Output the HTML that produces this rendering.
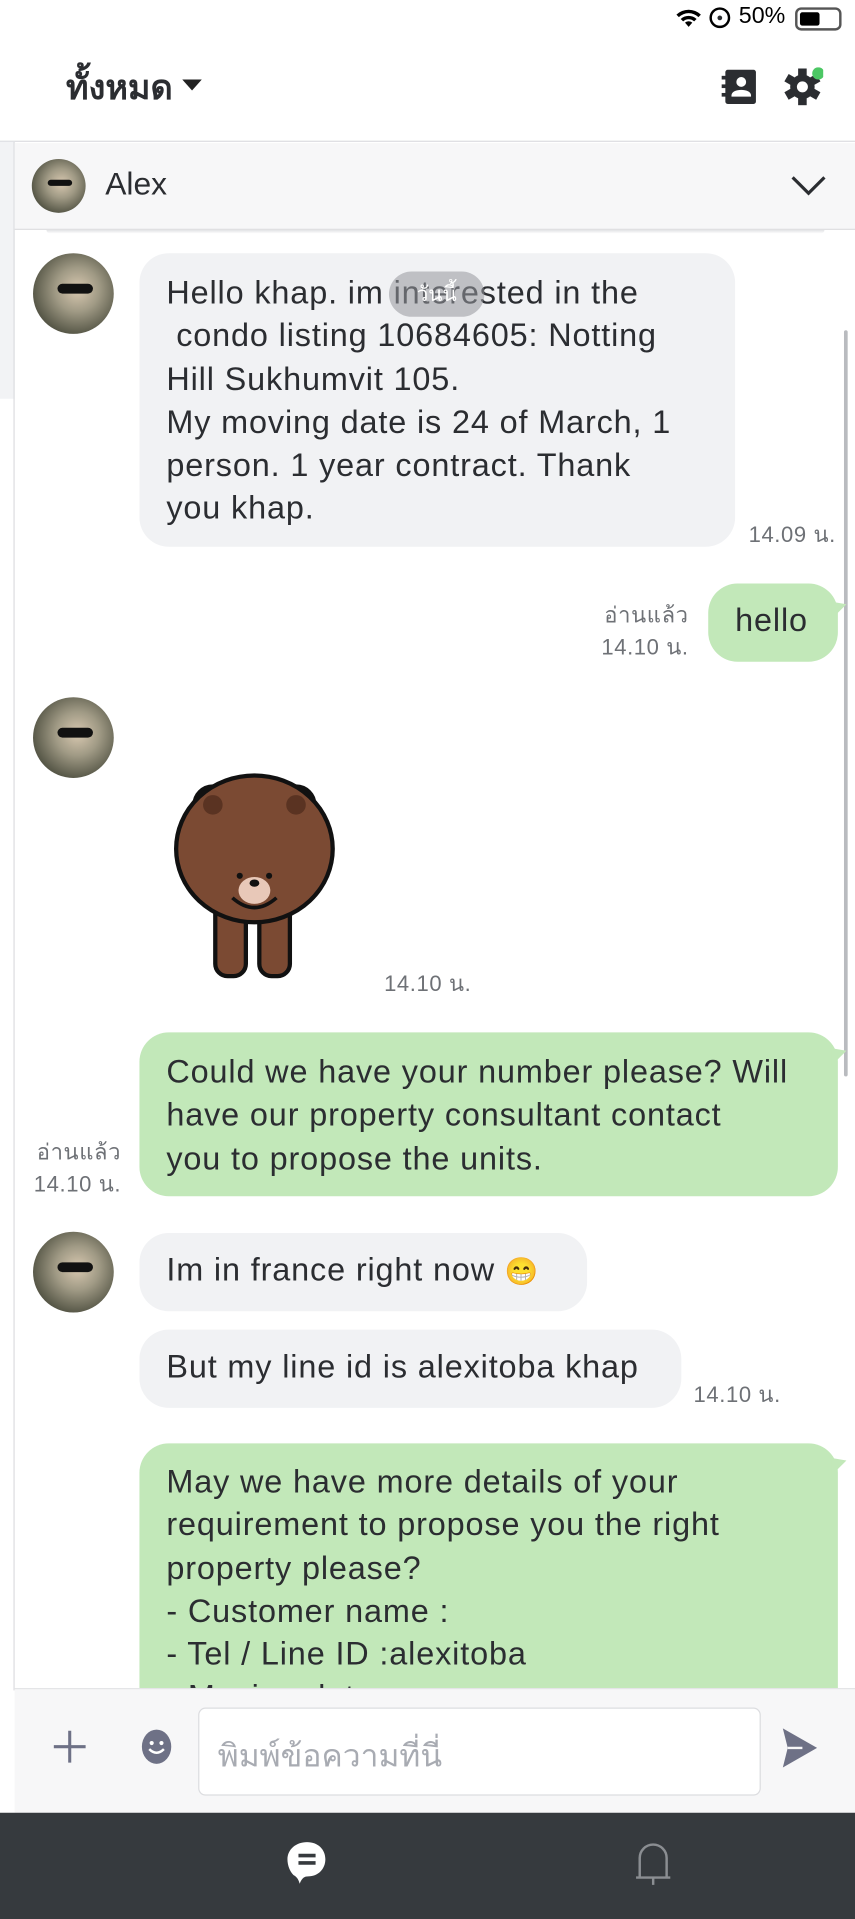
<!DOCTYPE html>
<html><head><meta charset="utf-8"><style>
*{margin:0;padding:0;box-sizing:border-box}
html,body{width:855px;height:1919px;overflow:hidden;background:#fff}
#w{position:absolute;left:0;top:0;width:699px;height:1569px;transform:scale(1.22318);transform-origin:0 0;font-family:"Liberation Sans","Noto Sans CJK SC",sans-serif;color:#2b2d31;overflow:hidden}
.a{position:absolute}
.av{position:absolute;border-radius:50%;background:radial-gradient(circle at 55% 45%,#d8c8b0 0,#a09a85 35%,#5a5a4a 70%,#2a2a25 100%);overflow:hidden}
.av:after{content:"";position:absolute;left:30%;top:38%;width:45%;height:12%;background:#111;border-radius:4px}
.b{position:absolute;border-radius:24px;font-size:26.5px;letter-spacing:0.7px;line-height:35.3px;padding:16px 22px;white-space:nowrap}
.g{background:#f1f2f4}.gr{background:#c2e8b9}
.t{position:absolute;font-size:18px;letter-spacing:0.5px;color:#6e7176;line-height:26px}
</style></head><body><div id="w">
<svg class="a" style="left:552px;top:6px" width="22" height="18" viewBox="0 0 22 18"><path d="M11 16l3-3.5a4.5 4.5 0 0 0-6 0z M4.5 9.5a9.5 9.5 0 0 1 13 0l-2 2a6.5 6.5 0 0 0-9 0z M1 6a14.5 14.5 0 0 1 20 0l-2 2a11.5 11.5 0 0 0-16 0z" fill="#000"/></svg>
<div class="a" style="left:580px;top:6px;width:17px;height:17px;border:2px solid #000;border-radius:50%;font-size:9px;text-align:center;line-height:13px">●</div>
<div class="a" style="left:604px;top:3px;font-size:19px;color:#000">50%</div>
<div class="a" style="left:650px;top:6px;width:38px;height:19px;border:2px solid #555;border-radius:5px"><div style="margin:2px;width:16px;height:11px;background:#000;border-radius:2px"></div></div>
<div class="a" style="left:54px;top:50px;font-size:28px;font-weight:bold">ทั้งหมด</div>
<svg class="a" style="left:149px;top:65px" width="16" height="10"><path d="M0 0h16L8 9z" fill="#222"/></svg>
<svg class="a" style="left:589px;top:56px" width="30" height="30" viewBox="0 0 30 30"><rect x="4" y="1" width="25" height="28" rx="2" fill="#2b2d31"/><rect x="1" y="6" width="5" height="3" fill="#2b2d31"/><rect x="1" y="13" width="5" height="3" fill="#2b2d31"/><rect x="1" y="20" width="5" height="3" fill="#2b2d31"/><circle cx="17" cy="11" r="4" fill="#fff"/><path d="M9 22c0-6 16-6 16 0v1H9z" fill="#fff"/></svg>
<svg class="a" style="left:641px;top:55px" width="32" height="32" viewBox="0 0 32 32"><g transform="translate(15,16)" fill="#2b2d31"><circle r="10"/><g id="th"><rect x="-3.5" y="-15" width="7" height="7"/></g><use href="#th" transform="rotate(60)"/><use href="#th" transform="rotate(120)"/><use href="#th" transform="rotate(180)"/><use href="#th" transform="rotate(240)"/><use href="#th" transform="rotate(300)"/><circle r="4.5" fill="#fff"/></g><circle cx="28" cy="5" r="5" fill="#4cc764"/></svg>
<div class="a" style="left:0;top:115px;width:699px;height:1px;background:#dcdde0"></div>
<div class="a" style="left:0;top:116px;width:12px;height:210px;background:#f2f3f5"></div>
<div class="a" style="left:11px;top:116px;width:1px;height:1266px;background:#dcdde0"></div>
<div class="a" style="left:12px;top:117px;width:687px;height:71px;background:#f7f7f8;border-bottom:1px solid #dfe0e2"></div>
<div class="a" style="left:38px;top:188px;width:636px;height:3px;background:linear-gradient(#e2e3e5,#fff);border-radius:0 0 6px 6px"></div>
<div class="av" style="left:26px;top:130px;width:44px;height:44px"></div>
<div class="a" style="left:86px;top:135px;font-size:26px">Alex</div>
<svg class="a" style="left:646px;top:143px" width="30" height="18"><path d="M2 2l13 13L28 2" stroke="#2b2d31" stroke-width="2.6" fill="none"/></svg>
<div class="a" style="left:690px;top:270px;width:3px;height:610px;background:#b9bbbf;border-radius:2px"></div>
<div class="av" style="left:27px;top:207px;width:66px;height:66px"></div>
<div class="b g" style="left:114px;top:207px;width:487px;height:240px;padding-top:15px">Hello khap. im interested in the<br>&nbsp;condo listing 10684605: Notting<br>Hill Sukhumvit 105.<br>My moving date is 24 of March, 1<br>person. 1 year contract. Thank<br>you khap.</div>
<div class="a" style="left:318px;top:222px;width:78px;height:37px;border-radius:19px;background:rgba(150,152,156,.55);color:#fff;font-size:17px;text-align:center;line-height:37px">วันนี้</div>
<div class="t" style="left:612px;top:424px">14.09 น.</div>
<div class="t" style="left:470px;top:490px;width:93px;text-align:right">อ่านแล้ว<br>14.10 น.</div>
<div class="b gr" style="left:579px;top:477px;width:106px;height:64px;padding:13px 22px">hello</div>
<svg class="a" style="left:680px;top:492px" width="12" height="14"><path d="M0 0L12 2 0 14z" fill="#c2e8b9"/></svg>
<div class="av" style="left:27px;top:570px;width:66px;height:66px"></div>
<svg class="a" style="left:138px;top:630px" width="140" height="174" viewBox="0 0 140 174">
<g stroke="#111" stroke-width="3.5" fill="#7b4a33">
<rect x="38" y="95" width="25" height="73" rx="10"/><rect x="74" y="95" width="25" height="73" rx="10"/>
<circle cx="36" cy="28" r="15"/><circle cx="104" cy="28" r="15"/>
<ellipse cx="70" cy="64" rx="64" ry="60"/>
</g>
<circle cx="36" cy="28" r="8" fill="#5a3322"/><circle cx="104" cy="28" r="8" fill="#5a3322"/>
<ellipse cx="70" cy="98" rx="13" ry="11" fill="#e8c8b8"/>
<circle cx="58" cy="86" r="2.5" fill="#111"/><circle cx="82" cy="86" r="2.5" fill="#111"/>
<ellipse cx="70" cy="92" rx="4" ry="3" fill="#111"/>
<path d="M52 104q18 16 36 0" stroke="#111" stroke-width="3" fill="none"/>
</svg>
<div class="t" style="left:314px;top:791px">14.10 น.</div>
<div class="t" style="left:6px;top:929px;width:93px;text-align:right">อ่านแล้ว<br>14.10 น.</div>
<div class="b gr" style="left:114px;top:844px;width:571px;height:134px;padding-top:15px">Could we have your number please? Will<br>have our property consultant contact<br>you to propose the units.</div>
<svg class="a" style="left:680px;top:857px" width="12" height="14"><path d="M0 0L12 2 0 14z" fill="#c2e8b9"/></svg>
<div class="av" style="left:27px;top:1007px;width:66px;height:66px"></div>
<div class="b g" style="left:114px;top:1008px;width:366px;height:64px;padding:13px 22px">Im in france right now <span style="font-size:22px">😁</span></div>
<div class="b g" style="left:114px;top:1087px;width:443px;height:64px;padding:13px 22px">But my line id is alexitoba khap</div>
<div class="t" style="left:567px;top:1127px">14.10 น.</div>
<div class="b gr" style="left:114px;top:1180px;width:571px;height:260px;padding-top:14px">May we have more details of your<br>requirement to propose you the right<br>property please?<br>- Customer name :<br>- Tel / Line ID :alexitoba<br>- Moving date :</div>
<svg class="a" style="left:680px;top:1192px" width="12" height="14"><path d="M0 0L12 2 0 14z" fill="#c2e8b9"/></svg>
<div class="a" style="left:12px;top:1380px;width:687px;height:102px;background:#f7f7f8;border-top:1px solid #e4e5e7"></div>
<svg class="a" style="left:43px;top:1414px" width="28" height="28"><path d="M14 1v26M1 14h26" stroke="#6e7186" stroke-width="2.5"/></svg>
<svg class="a" style="left:112px;top:1412px" width="32" height="32" viewBox="0 0 32 32"><ellipse cx="16" cy="16" rx="12" ry="14" fill="#6e7186"/><circle cx="12" cy="13" r="1.7" fill="#fff"/><circle cx="20" cy="13" r="1.7" fill="#fff"/><path d="M10 18q6 6 12 0" stroke="#fff" stroke-width="2" fill="none"/></svg>
<div class="a" style="left:162px;top:1396px;width:460px;height:72px;background:#fff;border:1px solid #dcdde0;border-radius:6px;padding:18px 15px;font-size:26px;color:#a8abb2">พิมพ์ข้อความที่นี่</div>
<svg class="a" style="left:638px;top:1412px" width="32" height="34" viewBox="0 0 32 34"><path d="M2 1L30 17 2 33l4-16z" fill="#6e7186"/><path d="M6 17h12" stroke="#f7f7f8" stroke-width="2"/></svg>
<div class="a" style="left:0;top:1482px;width:699px;height:87px;background:#363a3e"></div>
<svg class="a" style="left:233px;top:1504px" width="36" height="40" viewBox="0 0 36 40"><path d="M18 2C27 2 33 8 33 16s-6 14-14 14c-3 0-5 1-7 6-1-4-3-6-5-7C4 26 2 21 2 16 2 8 9 2 18 2z" fill="#fff"/><path d="M11 13h14M11 19h14" stroke="#363a3e" stroke-width="3"/></svg>
<svg class="a" style="left:517px;top:1503px" width="34" height="40" viewBox="0 0 34 40"><path d="M6 32V16a11 11 0 0 1 22 0v16zM3 32h28M17 32v6" stroke="#8b8e92" stroke-width="2" fill="none"/></svg>
</div></body></html>
